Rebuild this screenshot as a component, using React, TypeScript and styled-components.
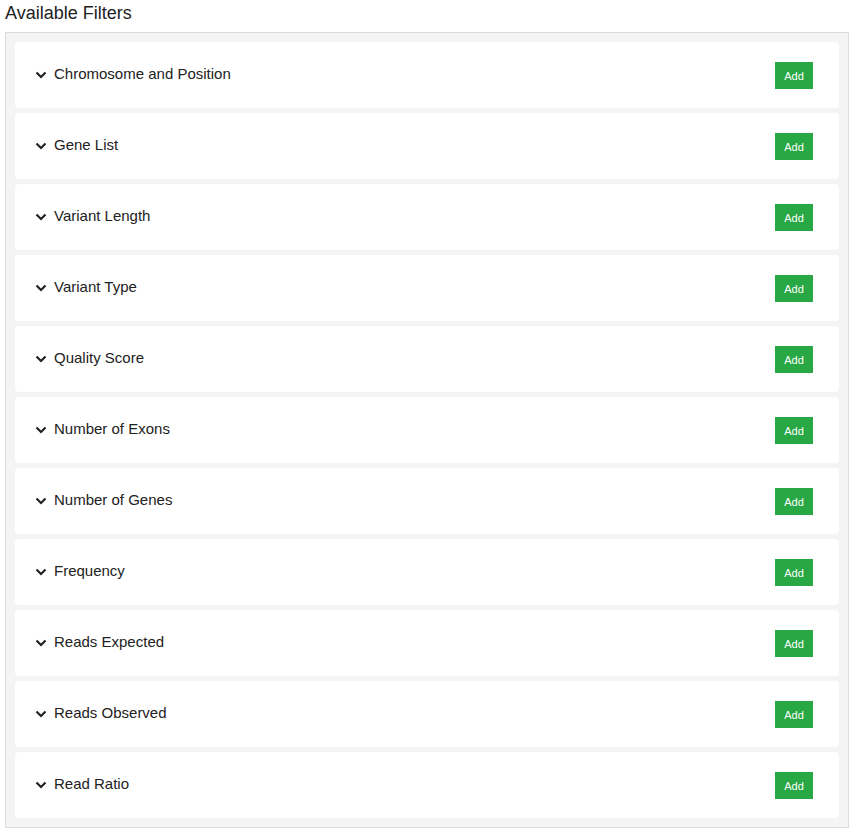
import styled, { createGlobalStyle } from 'styled-components';

const filters = [
  'Chromosome and Position',
  'Gene List',
  'Variant Length',
  'Variant Type',
  'Quality Score',
  'Number of Exons',
  'Number of Genes',
  'Frequency',
  'Reads Expected',
  'Reads Observed',
  'Read Ratio',
]

function Chevron() {
  return (
    <ChevronIcon width="12" height="8" viewBox="0 0 12 8">
      <polyline points="1.5,1.5 6,6 10.5,1.5" fill="none" stroke="#222" strokeWidth="2.2" />
    </ChevronIcon>
  )
}

function App() {
  return (
    <>
      <GlobalStyle />
      <Page>
        <Title>Available Filters</Title>
        <FilterPanel>
          {filters.map((name) => (
            <FilterCard key={name}>
              <Toggle>
                <Chevron />
                <FilterName>{name}</FilterName>
              </Toggle>
              <AddButton>Add</AddButton>
            </FilterCard>
          ))}
        </FilterPanel>
      </Page>
    </>
  )
}

export default App;

const GlobalStyle = createGlobalStyle`
  body {
    margin: 0;
    background: #fff;
    font-family: "Liberation Sans", Arial, sans-serif;
    color: #212529;
  }
`
const Page = styled.div`
  padding: 3px 14px 0 5px;
`
const Title = styled.h2`
  margin: 0 0 8px;
  font-size: 18px;
  font-weight: normal;
  line-height: 21px;
  color: #222;
`
const FilterPanel = styled.div`
  display: flex;
  flex-direction: column;
  gap: 5px;
  padding: 9px;
  background: #f4f4f4;
  border: 1px solid #dcdcdc;
`
const FilterCard = styled.div`
  display: flex;
  justify-content: space-between;
  align-items: flex-start;
  padding: 20px 26px 19px 20px;
  background: #fff;
  border-radius: 4px;
`
const Toggle = styled.div`
  display: flex;
  align-items: center;
  gap: 7px;
  margin-top: 1px;
  cursor: pointer;
`
const ChevronIcon = styled.svg`
  display: block;
  margin-top: 3px;
`
const FilterName = styled.span`
  font-size: 15px;
  line-height: 21px;
  color: #222;
`
const AddButton = styled.button`
  width: 38px;
  height: 27px;
  padding: 0;
  border: none;
  border-radius: 0;
  background: #28a745;
  color: #fff;
  font-family: "Liberation Sans", Arial, sans-serif;
  font-size: 11px;
  cursor: pointer;
`
